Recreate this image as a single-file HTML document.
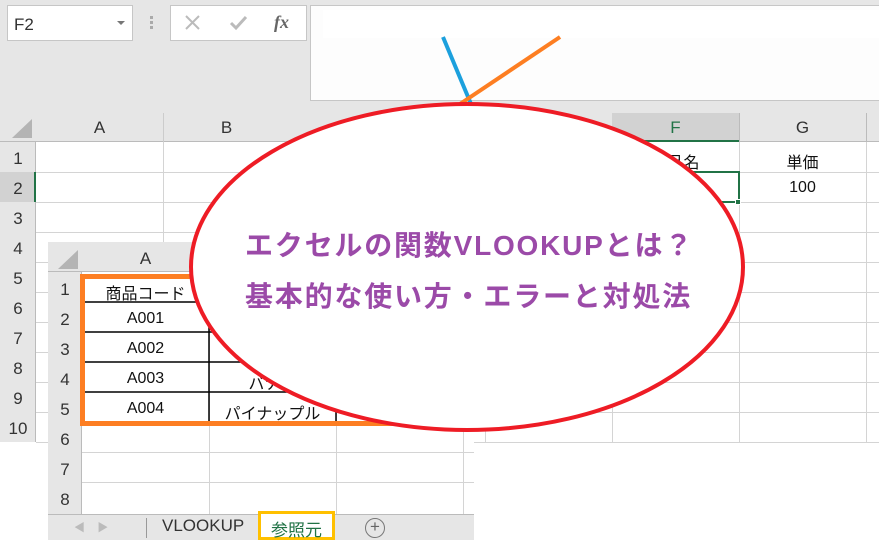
<!DOCTYPE html>
<html><head><meta charset="utf-8"><style>
*{margin:0;padding:0;box-sizing:border-box}
body{width:879px;height:544px;overflow:hidden;background:#fff;position:relative;font-family:"Liberation Sans","Noto Sans CJK JP",sans-serif;color:#222}
.a{position:absolute}
.hd{background:#e6e6e6;color:#333;font-size:17px;text-align:center}
.c{position:absolute;font-size:16px;text-align:center;color:#111}
</style></head><body>
<div class="a" style="left:0;top:0;width:879px;height:113px;background:#e6e6e6"></div>
<div class="a" style="left:7px;top:5px;width:126px;height:36px;background:#fff;border:1px solid #c6c6c6;font-size:17px;padding:9px 0 0 6px;color:#333">F2</div>
<div class="a" style="left:117px;top:21px;width:0;height:0;border-left:4px solid transparent;border-right:4px solid transparent;border-top:4px solid #777"></div>
<div class="a" style="left:150px;top:16px;width:3px;height:3px;background:#aaa;box-shadow:0 5px 0 #aaa,0 10px 0 #aaa"></div>
<div class="a" style="left:170px;top:5px;width:137px;height:36px;background:#fff;border:1px solid #c6c6c6"></div>
<svg class="a" style="left:184px;top:14px" width="80" height="20"><path d="M2 2 L15 15 M15 2 L2 15" stroke="#bbb" stroke-width="2"/><path d="M47 9 L52 14 L62 3" stroke="#bbb" stroke-width="3" fill="none"/></svg>
<div class="a" style="left:274px;top:12px;font-size:18px;color:#666;font-style:italic;font-family:'Liberation Serif',serif;font-weight:bold">fx</div>
<div class="a" style="left:310px;top:5px;width:575px;height:96px;background:#fdfdfd;border:1px solid #c6c6c6"></div>
<div class="a" style="left:323px;top:10px;width:556px;height:28px;background:#fff"></div>
<div class="a" style="left:0;top:113px;width:879px;height:29px;background:#e6e6e6;border-bottom:1px solid #bbb"></div>
<div class="a" style="left:612px;top:113px;width:127px;height:29px;background:#d2d2d2;border-bottom:2px solid #217346"></div>
<svg class="a" style="left:10px;top:117px" width="24" height="22"><polygon points="22,2 22,21 2,21" fill="#b4b4b4"/></svg>
<div class="a hd" style="left:36px;top:118px;width:127px;background:none">A</div>
<div class="a hd" style="left:163px;top:118px;width:127px;background:none">B</div>
<div class="a hd" style="left:612px;top:118px;width:127px;background:none;color:#217346">F</div>
<div class="a hd" style="left:739px;top:118px;width:127px;background:none">G</div>
<div class="a" style="left:163px;top:113px;width:1px;height:29px;background:#ccc"></div>
<div class="a" style="left:739px;top:113px;width:1px;height:29px;background:#bbb"></div>
<div class="a" style="left:866px;top:113px;width:1px;height:29px;background:#bbb"></div>
<svg class="a" style="left:0;top:142px" width="879" height="302">
<g stroke="#d4d4d4" stroke-width="1">
<line x1="163.5" y1="0" x2="163.5" y2="300"/><line x1="290.5" y1="0" x2="290.5" y2="300"/><line x1="485.5" y1="0" x2="485.5" y2="300"/><line x1="612.5" y1="0" x2="612.5" y2="300"/><line x1="739.5" y1="0" x2="739.5" y2="300"/><line x1="866.5" y1="0" x2="866.5" y2="300"/>
<line x1="36" y1="30.5" x2="879" y2="30.5"/><line x1="36" y1="60.5" x2="879" y2="60.5"/><line x1="36" y1="90.5" x2="879" y2="90.5"/><line x1="36" y1="120.5" x2="879" y2="120.5"/><line x1="36" y1="150.5" x2="879" y2="150.5"/><line x1="36" y1="180.5" x2="879" y2="180.5"/><line x1="36" y1="210.5" x2="879" y2="210.5"/><line x1="36" y1="240.5" x2="879" y2="240.5"/><line x1="36" y1="270.5" x2="879" y2="270.5"/><line x1="36" y1="300.5" x2="879" y2="300.5"/>
</g></svg>
<div class="a" style="left:0;top:142px;width:36px;height:300px;background:#e6e6e6;border-right:1px solid #bbb"></div>
<div class="a" style="left:0;top:172px;width:36px;height:30px;background:#d2d2d2;border-right:2px solid #217346"></div>
<div class="a" style="left:0;top:144px;width:36px;font-size:17px;text-align:center;line-height:30px;color:#333">1<br>2<br>3<br>4<br>5<br>6<br>7<br>8<br>9<br>10</div>
<div class="a" style="left:611px;top:171px;width:129px;height:32px;border:2px solid #217346"></div>
<div class="a" style="left:735px;top:199px;width:6px;height:6px;background:#217346;border:1px solid #fff"></div>
<div class="c" style="left:612px;top:149px;width:127px">商品名</div>
<div class="c" style="left:739px;top:149px;width:127px">単価</div>
<div class="c" style="left:739px;top:179px;width:127px">100</div>
<div class="a" style="left:48px;top:242px;width:426px;height:298px;background:#fff"></div>
<div class="a" style="left:48px;top:242px;width:426px;height:30px;background:#e6e6e6;border-bottom:1px solid #bbb"></div>
<svg class="a" style="left:56px;top:248px" width="24" height="22"><polygon points="22,2 22,21 2,21" fill="#b4b4b4"/></svg>
<div class="c" style="left:82px;top:249px;width:127px;color:#333;font-size:17px">A</div>
<div class="a" style="left:48px;top:272px;width:34px;height:242px;background:#e6e6e6;border-right:1px solid #bbb"></div>
<div class="a" style="left:48px;top:275px;width:34px;font-size:17px;text-align:center;line-height:30px;color:#333">1<br>2<br>3<br>4<br>5<br>6<br>7<br>8</div>
<svg class="a" style="left:82px;top:272px" width="392" height="242">
<g stroke="#d4d4d4"><line x1="127.5" y1="0" x2="127.5" y2="242"/><line x1="254.5" y1="0" x2="254.5" y2="242"/><line x1="381.5" y1="0" x2="381.5" y2="242"/>
<line x1="0" y1="180.5" x2="392" y2="180.5"/><line x1="0" y1="210.5" x2="392" y2="210.5"/></g>
<g stroke="#000" stroke-width="1.5"><line x1="0" y1="30" x2="254" y2="30"/><line x1="0" y1="60" x2="254" y2="60"/><line x1="0" y1="90" x2="254" y2="90"/><line x1="0" y1="120" x2="254" y2="120"/><line x1="127" y1="30" x2="127" y2="150"/><line x1="254" y1="120" x2="254" y2="150"/></g>
</svg>
<div class="c" style="left:82px;top:280px;width:127px">商品コード</div>
<div class="c" style="left:82px;top:310px;width:127px">A001</div>
<div class="c" style="left:82px;top:340px;width:127px">A002</div>
<div class="c" style="left:82px;top:370px;width:127px">A003</div>
<div class="c" style="left:82px;top:400px;width:127px">A004</div>
<div class="c" style="left:209px;top:370px;width:127px">バナナ</div>
<div class="c" style="left:209px;top:400px;width:127px">パイナップル</div>
<div class="a" style="left:80px;top:274px;width:342px;height:152px;border:5px solid #fd7e22"></div>
<div class="a" style="left:48px;top:514px;width:426px;height:26px;background:#e6e6e6;border-top:1px solid #bbb"></div>
<div class="a" style="left:74px;top:519px;font-size:11px;color:#bbb">◀&nbsp;&nbsp;&nbsp;&nbsp;▶</div>
<div class="a" style="left:146px;top:518px;width:1px;height:20px;background:#999"></div>
<div class="a" style="left:162px;top:516px;font-size:17px;color:#333">VLOOKUP</div>
<div class="a" style="left:258px;top:511px;width:77px;height:29px;border:3px solid #ffc000;background:#fff;font-size:17px;color:#217346;text-align:center;padding-top:2px">参照元</div>
<div class="a" style="left:365px;top:518px;width:20px;height:20px;border:1.5px solid #777;border-radius:50%;font-size:17px;line-height:16px;text-align:center;color:#666">+</div>
<svg class="a" style="left:0;top:0" width="879" height="544">
<line x1="443" y1="37" x2="471" y2="104" stroke="#1ca0dd" stroke-width="4"/>
<line x1="560" y1="37" x2="457" y2="106" stroke="#fd7e22" stroke-width="4"/>
<ellipse cx="467" cy="267" rx="276" ry="163" fill="#fff" stroke="#ee1c25" stroke-width="4"/>
</svg>
<div class="a" style="left:245px;top:220px;font-size:28px;font-weight:bold;color:#9b4aa8;letter-spacing:1.8px;line-height:51px;white-space:nowrap">エクセルの関数VLOOKUPとは？<br>基本的な使い方・エラーと対処法</div>
</body></html>
